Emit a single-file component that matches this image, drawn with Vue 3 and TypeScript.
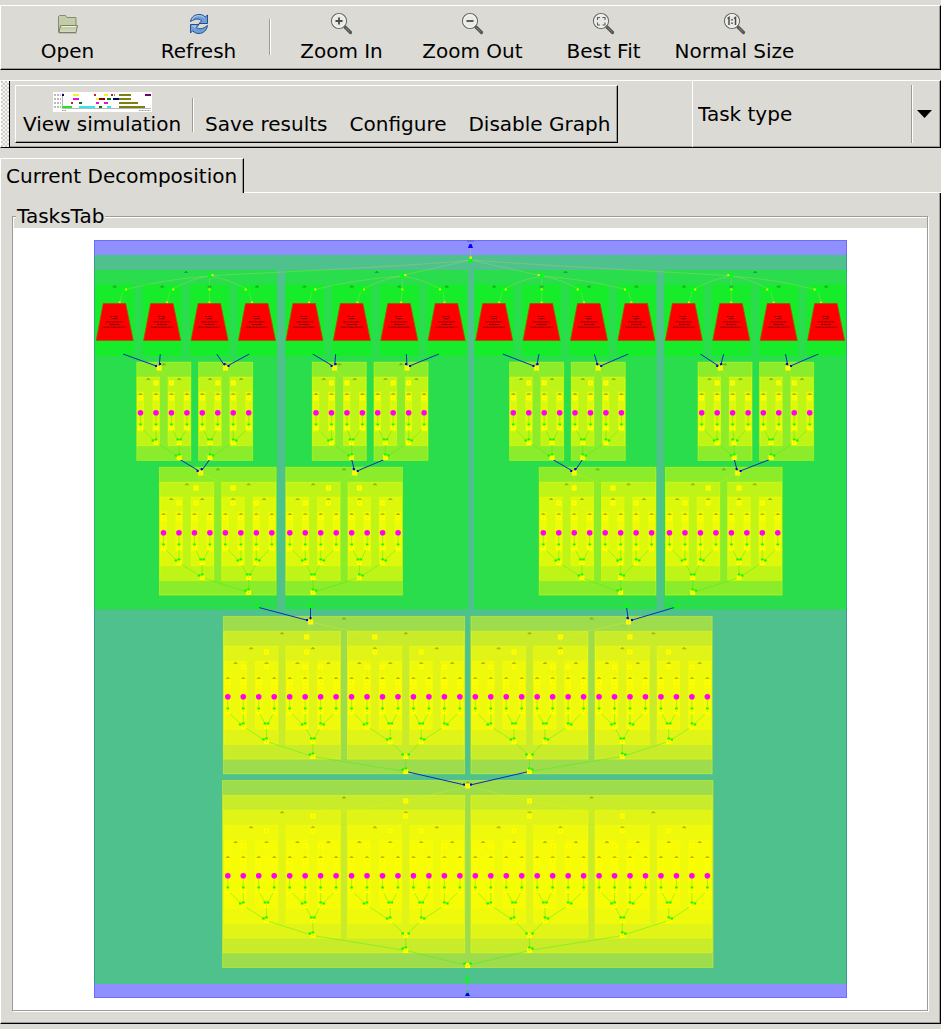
<script setup lang="ts">
import { ref } from 'vue'

interface Box { x: number; y: number; w: number; h: number }
interface Point { x: number; y: number }
interface Line { x1: number; y1: number; x2: number; y2: number }
interface Tree { x: number; y: number; depth: number; bottom: number[][]; top: number[][] }

const taskType = ref('Task type')
const pitch = 15.47

const trees: Tree[] = [
  { x: 140.5, y: 412.5, depth: 2, bottom: [[1, 2.5], [2.5]], top: [[1, 2], [1.2]] },
  { x: 202.3, y: 412.5, depth: 2, bottom: [[0.5, 2], [0.5]], top: [[1, 2], [1.5]] },
  { x: 316, y: 412.5, depth: 2, bottom: [[1, 2.3], [2.3]], top: [[1, 2], [1.2]] },
  { x: 377.7, y: 412.5, depth: 2, bottom: [[0.5, 2], [0.5]], top: [[1, 2], [1.9]] },
  { x: 513.3, y: 412.5, depth: 2, bottom: [[1, 2.5], [2.5]], top: [[1, 2], [1.5]] },
  { x: 575, y: 412.5, depth: 2, bottom: [[0.5, 2], [0.5]], top: [[1, 2], [1.5]] },
  { x: 701.7, y: 412.5, depth: 2, bottom: [[1, 2.1], [2.1]], top: [[1, 2], [1.2]] },
  { x: 763.3, y: 412.5, depth: 2, bottom: [[0.5, 2], [0.5]], top: [[1, 2], [1.6]] },
  { x: 163.5, y: 532.5, depth: 3, bottom: [[1, 2.5, 5, 6], [2.5, 5.5], [5.5]], top: [[1, 2.1, 4.5, 6], [2.1, 4.5], [2.4]] },
  { x: 289.8, y: 532.5, depth: 3, bottom: [[1, 2, 4.5, 6], [1.5, 4.5], [1.5]], top: [[1, 2.5, 4.5, 6], [2.5, 4.5], [4.2]] },
  { x: 543.3, y: 532.5, depth: 3, bottom: [[1, 2.5, 5, 6], [2.5, 5], [5]], top: [[1, 2, 4.5, 6], [2, 4.5], [2]] },
  { x: 669.5, y: 532.5, depth: 3, bottom: [[1, 2, 4.5, 6], [1.5, 4.5], [1.5]], top: [[1, 2.5, 4.5, 6], [2.5, 4.5], [4.4]] },
  {
    x: 227.8, y: 696.5, depth: 4,
    bottom: [[1, 2.5, 5, 6, 9, 10.5, 12.5, 14], [2.5, 5.5, 10.5, 12.5], [5.5, 11.5], [11.5]],
    top: [[1, 2.5, 5, 6, 9, 10, 12.5, 14], [2.5, 5.1, 9.5, 12.5], [5.1, 9.5], [5.35]],
  },
  {
    x: 475.3, y: 696.5, depth: 4,
    bottom: [[1, 2.5, 4.5, 6, 9, 10, 12.5, 14], [2.5, 4.5, 9.5, 12.5], [3.5, 9.5], [3.5]],
    top: [[1, 2.5, 5, 6, 9, 10, 12.5, 14], [2.5, 5.5, 10, 12.5], [5.5, 10], [9.9]],
  },
  {
    x: 227.8, y: 875.5, depth: 5,
    bottom: [
      [1, 2.5, 5, 6, 9, 10.5, 12.5, 14, 17, 18.5, 20.5, 22, 25, 26, 28.5, 30],
      [2.5, 5.5, 10.5, 12.5, 18.5, 20.5, 25.5, 28.5],
      [5.5, 11.5, 19.5, 25.5], [11.5, 19.5], [15.5],
    ],
    top: [
      [1, 2.5, 5, 6, 9, 10.5, 12.5, 14, 17, 18.5, 21, 22, 25, 26, 28.5, 30],
      [2.5, 5.5, 10.5, 12.5, 18.5, 21.5, 25.5, 28.5],
      [5.5, 11.5, 19.5, 25.5], [11.5, 19.5], [15.5],
    ],
  },
]

const range = (n: number): number[] => Array.from({ length: n }, (_, i) => i)

const boxes: Box[] = []
const dots: Point[] = []
const nodes: Point[] = []
const flow: Line[] = []
const fan: Line[] = []
const heads: Point[] = []
const marks: Point[] = []

for (const t of trees) {
  const at = (i: number): number => t.x + i * pitch
  for (let k = t.depth; k >= 0; k--) {
    const span = 2 ** k
    for (const g of range(2 ** (t.depth - k))) {
      const left = at(g * span) - 3 - 0.35 * k
      const right = at(g * span + span - 1) + 3 + 0.45 * k
      const top = t.y - 20.5 - 14.9 * k
      boxes.push({ x: left, y: top, w: right - left, h: 39 + 29.6 * k })
      marks.push({ x: (left + right) / 2, y: top + 2 })
      const b: Point = { x: k ? at(t.bottom[k - 1][g]) : at(g), y: t.y + 15 * (k + 1) }
      const a: Point = { x: k ? at(t.top[k - 1][g]) : at(g), y: t.y - 15 * (k + 1) + 0.5 }
      nodes.push(a, b)
      if (k === 0) {
        dots.push({ x: at(g), y: t.y + 0.3 })
        flow.push({ x1: b.x, y1: t.y, x2: b.x, y2: b.y })
        heads.push({ x: b.x, y: t.y + 12 })
      } else {
        for (const c of [2 * g, 2 * g + 1]) {
          const bx = k > 1 ? at(t.bottom[k - 2][c]) : at(c)
          const ax = k > 1 ? at(t.top[k - 2][c]) : at(c)
          flow.push({ x1: bx, y1: b.y - 15, x2: b.x, y2: b.y })
          fan.push({ x1: a.x, y1: a.y, x2: ax, y2: a.y + 15 })
          const dx = bx - b.x
          const far = Math.abs(dx) > 12
          heads.push({ x: b.x + Math.sign(dx) * (far ? 3 : Math.abs(dx) > 1 ? 1.5 : 0), y: b.y - (far ? 2 : 3) })
        }
      }
    }
  }
}

const groupX = [94.5, 285.3, 474, 663.7]
const groupHub = [209.5, 402.3, 541.7, 731.3]
const groups: Box[] = groupX.map((x) => ({ x, y: 270, w: 182.7, h: 339.5 }))
const hubNodes = [
  [123, 170.3, 209.5, 248.7],
  [312.3, 361, 402.3, 443],
  [502.7, 541.7, 580.7, 628],
  [692.3, 731.3, 770.3, 817.7],
]
const exits = [
  [123, 160.3, 216.7, 249.3],
  [312.7, 335.7, 406.3, 439],
  [502.7, 539, 594.3, 628.3],
  [700.3, 723.7, 785.5, 818.5],
]
const leaves = groupX.flatMap((_, g) => range(4).map((i) => {
  const c = 114.7 + (g * 4 + i) * 47.43
  const node = hubNodes[g][i]
  const side = Math.sign(groupHub[g] - node)
  return { c, node, side, port: c + (node - c) * 0.6, hub: groupHub[g], exit: exits[g][i] }
}))

const links: Line[] = [
  ...exits.flatMap((row, g) => row.map((x, i) => {
    const t = trees[g * 2 + (i > 1 ? 1 : 0)]
    return { x1: x, y1: 354, x2: t.x + t.top[1][0] * pitch, y2: 367 }
  })),
  ...trees.slice(0, 8).map((t, i) => {
    const d = trees[8 + Math.floor(i / 2)]
    return { x1: t.x + t.bottom[1][0] * pitch, y1: 459, x2: d.x + d.top[2][0] * pitch, y2: 472 }
  }),
  { x1: 257, y1: 607, x2: 310, y2: 621 },
  { x1: 310.5, y1: 607, x2: 310.5, y2: 621 },
  { x1: 626.5, y1: 607, x2: 628.5, y2: 621 },
  { x1: 676, y1: 607, x2: 629, y2: 621 },
  { x1: 406, y1: 771.5, x2: 467, y2: 785.5 },
  { x1: 529, y1: 771.5, x2: 468, y2: 785.5 },
]
const linkHeads: Point[] = links.map((l) => {
  const dx = l.x1 - l.x2
  return { x: l.x2 + Math.sign(dx) * (Math.abs(dx) > 12 ? 3 : 1), y: l.y2 - (Math.abs(dx) > 12 ? 1 : 3) }
})
const exitsLow: Line[] = [
  { x1: 248.5, y1: 592, x2: 257, y2: 607 },
  { x1: 313, y1: 592, x2: 310.5, y2: 607 },
  { x1: 621, y1: 592, x2: 626.5, y2: 607 },
  { x1: 692.5, y1: 592, x2: 676, y2: 607 },
]

const bars: [number, number, number, string][] = [
  [9, 2, 2, '#000080'], [20, 2, 6, '#f2f224'], [41, 2, 2, '#c02020'], [51, 2, 4, '#f2f224'], [58, 2, 2, '#c02020'], [61, 2, 1, '#888'], [66, 2, 12, '#808010'], [92, 2, 6, '#700070'],
  [20, 6, 6, '#e010e0'], [43, 6, 3, '#f2f224'], [46, 6, 6, '#900000'], [54, 6, 4, '#107010'], [60, 6, 6, '#000070'], [66, 6, 12, '#808010'],
  [18, 10, 2, '#c02020'], [26, 10, 3, '#107010'], [43, 10, 3, '#e010e0'], [51, 10, 4, '#e010e0'], [66, 10, 19, '#808010'],
  [9, 14, 10, '#20e820'], [26, 14, 16, '#30eaea'], [46, 14, 3, '#107010'], [54, 14, 4, '#30eaea'], [66, 14, 26, '#808010'],
]
const textRows: [number, number, string][] = [
  [316.5, 9, '2 .4 1.5 .3 3'], [318.7, 6, '1 .5 3 .4'], [321.9, 17, '3 .4 2 .5 4 .3'], [324.5, 10, '2 .3 3 .5'], [327.2, 22, '2 .4 3 .3 1 .4'],
]
</script>

<template>
  <main class="app">
    <nav class="bar main-bar" aria-label="Main toolbar">
      <button type="button" class="tool">
        <svg class="icon" viewBox="0 0 24 24" aria-hidden="true">
          <defs>
            <linearGradient id="folder" x2="0" y2="1"><stop stop-color="#b9c49a" /><stop offset="1" stop-color="#d5dcc0" /></linearGradient>
          </defs>
          <path d="M2.500 20.500V4.500l1-1h6l1.500 2h9v9" fill="#c3cba8" stroke="#858a70" />
          <path d="M4.500 13.500h17l-1.500 7h-17z" fill="url(#folder)" stroke="#7b8068" />
          <path d="M5.300 14.500h15" stroke="#eef2df" />
          <path d="M3 21.500h18" stroke="#aaa99f" opacity=".6" />
        </svg>
        <span>Open</span>
      </button>
      <button type="button" class="tool">
        <svg class="icon" viewBox="0 0 24 24" aria-hidden="true">
          <path d="M3.500 9.500C4.500 4.500 8 2.500 12 2.500c3 0 4.700 1 6.200 2.500L20.500 3v8.500h-8.500l2.700-2.800C11.500 6.300 8.500 6.500 3.500 9.500z" fill="#6f9fd8" stroke="#234f91" stroke-linejoin="round" />
          <path d="M5 8C6 4.800 9 3.700 12 3.700c2.500 0 4.300 1 5.600 2.300" fill="none" stroke="#b8d2f0" />
          <path d="M20.500 13.500c-.7 5-4.500 8-8.500 8-2.800 0-4.700-1-6.300-2.700L3.500 21v-8.500H12l-2.700 3c3.200 2.300 6.500 1.500 11.200-2z" fill="#6f9fd8" stroke="#234f91" stroke-linejoin="round" />
          <path d="M5 14h4l-2 2.200" fill="none" stroke="#b8d2f0" />
        </svg>
        <span>Refresh</span>
      </button>
      <i class="rule"></i>
      <button v-for="kind in ['Zoom In', 'Zoom Out', 'Best Fit', 'Normal Size']" :key="kind" type="button" class="tool">
        <svg class="icon" viewBox="0 0 24 24" aria-hidden="true">
          <path d="M15 15l5.500 5.500" stroke="#555753" stroke-width="3.200" stroke-linecap="round" />
          <path d="M15.500 15.500l4 4" stroke="#8a8c88" stroke-width=".8" />
          <circle cx="9" cy="9" r="7.500" fill="#eeeeec" fill-opacity=".75" stroke="#666864" stroke-width="1.200" />
          <circle cx="9" cy="9" r="6.400" fill="none" stroke="#fff" stroke-opacity=".7" />
          <path v-if="kind === 'Zoom In'" d="M5.500 9h7M9 5.500v7" stroke="#4b4d49" stroke-width="1.800" />
          <path v-else-if="kind === 'Zoom Out'" d="M5.500 9h7" stroke="#4b4d49" stroke-width="1.800" />
          <path v-else-if="kind === 'Best Fit'" d="M5.500 8V5.500H8M10.500 5.500H13V8M13 10.500V13h-2.500M8 13H5.500v-2.500" fill="none" stroke="#5d5f5b" stroke-width="1.100" />
          <path v-else d="M4.500 6.500l1.500-1V13M11 6.500l1.500-1V13M9 7v1.500M9 10.500V12" fill="none" stroke="#4b4d49" stroke-width="1.500" />
        </svg>
        <span>{{ kind }}</span>
      </button>
    </nav>

    <section class="bar task-bar">
      <div class="grip"></div>
      <div class="actions">
        <button type="button" class="action">
          <svg class="thumb" viewBox="0 0 99 20" aria-hidden="true">
            <rect width="99" height="20" fill="#fff" />
            <path d="M1 3h7M1 7h7M1 11h7M1 15h7" stroke="#777" stroke-width="1" stroke-dasharray="2 1" />
            <path d="M9.500 1v15.500H98" stroke="#888" fill="none" stroke-width=".6" />
            <path d="M9 18.500h4M86 18.500h12" stroke="#999" stroke-dasharray="1 .5" />
            <rect v-for="(b, i) in bars" :key="i" :x="b[0]" :y="b[1]" :width="b[2]" height="2" :fill="b[3]" />
          </svg>
          <span>View simulation</span>
        </button>
        <i class="rule short"></i>
        <button type="button" class="action">Save results</button>
        <button type="button" class="action">Configure</button>
        <button type="button" class="action">Disable Graph</button>
      </div>
      <div class="combo">
        <select v-model="taskType" aria-label="Task type">
          <option>Task type</option>
        </select>
        <i class="rule tall"></i>
        <svg class="arrow" viewBox="0 0 15 8" aria-hidden="true"><path d="M0 0h15L7.500 8z" /></svg>
      </div>
    </section>

    <section class="notebook">
      <div class="tabs" role="tablist">
        <button type="button" class="tab" role="tab" aria-selected="true">Current Decomposition</button>
        <div class="tabs-rest"></div>
      </div>
      <div class="page" role="tabpanel">
        <fieldset class="frame">
          <legend>TasksTab</legend>
          <svg class="graph" viewBox="13 228 914 782" role="img" aria-label="Task decomposition graph">
            <rect x="94.500" y="240.500" width="752" height="757" fill="#8f8fff" stroke="#6c6cff" />
            <rect x="94" y="255" width="753" height="729" class="green" />
            <path d="M94.500 255v729M846.500 255v729" stroke="#358f90" opacity=".5" />
            <rect v-for="(g, i) in groups" :key="i" :x="g.x" :y="g.y" :width="g.w" :height="g.h" class="green" />

            <path d="M470.500 257v-10" stroke="#a0a8c0" />
            <path d="M470.500 260Q430 265 213 275.500M470.500 260L404 275M470.500 260L540 275.500M470.500 260Q520 264 728 275.500" class="branch" />
            <g v-for="(l, i) in leaves" :key="'l' + i">
              <rect :x="l.c - 19.500" y="284.500" width="39" height="71.500" class="green" />
              <path :d="`M${l.hub} 276Q${(l.hub + l.node) / 2} 279 ${l.node} 290L${l.port} 303`" class="branch" />
              <path :d="`M${l.c - 1} 285.500h2v1h1v1h-4v-1h1z`" fill="#07701d" opacity=".5" />
              <rect :x="l.node - 2" y="288" width="4" height="4" fill="#00ff18" />
              <rect :x="l.node - 1 + l.side * 3" y="288.500" width="2" height="2" fill="#e8f200" />
              <rect :x="l.port - 1" y="301.500" width="2" height="2" fill="#f2e800" />
              <polygon :points="`${l.c - 11.500},303.500 ${l.c + 11},303.500 ${l.c + 18.500},340.500 ${l.c - 18.500},340.500`" fill="#f00" stroke="#b05000" stroke-width=".8" />
              <path v-for="r in textRows" :key="r[0]" :d="`M${l.c - r[1] / 2} ${r[0]}h${r[1]}`" :stroke-dasharray="r[2]" class="tiny" />
              <circle :cx="l.exit" cy="353" r="2" fill="#00ff18" />
            </g>
            <g v-for="(x, i) in groupHub" :key="'h' + i">
              <rect :x="x - 2" y="274" width="4" height="4" fill="#00ff18" />
              <rect :x="x + (i < 2 ? 2 : -4)" y="274" width="2" height="2" fill="#e8f000" />
              <path :d="`M${groupX[i] + 90.500} 271h2v1h1v1h-4v-1h1z`" fill="#108040" opacity=".6" />
            </g>
            <rect x="468.500" y="258.500" width="4" height="4" fill="#00ff18" />
            <rect x="469.500" y="256.500" width="2.500" height="2.500" fill="#e8f000" />
            <path d="M468 248l1.500-4h2l1.500 4z" fill="#00f" />
            <path d="M467 241h7" stroke="#5a5ab8" />

            <rect x="222.500" y="780.500" width="490.500" height="187" class="yellow" />
            <rect v-for="(b, i) in boxes.filter((v) => v.w < 480)" :key="'b' + i" :x="b.x" :y="b.y" :width="b.w" :height="b.h" class="yellow" />
            <path v-for="(m, i) in marks" :key="'m' + i" :d="`M${m.x - 1} ${m.y - 1}h2v1h1v1h-4v-1h1z`" class="mark" />
            <line v-for="(l, i) in fan" :key="'f' + i" v-bind="l" class="fan" />
            <line v-for="(l, i) in flow" :key="'w' + i" v-bind="l" class="flow" />
            <line v-for="(l, i) in exitsLow" :key="'x' + i" v-bind="l" class="flow" />
            <line v-for="(l, i) in links" :key="'k' + i" v-bind="l" class="link" />
            <rect v-for="(n, i) in nodes" :key="'n' + i" :x="n.x - 2.500" :y="n.y - 2.500" width="5" height="5" fill="#ff0" />
            <rect v-for="(n, i) in nodes" :key="'c' + i" :x="n.x - 0.500" :y="n.y - 0.500" width="1" height="1" fill="#e0dc00" />
            <rect v-for="(n, i) in heads" :key="'g' + i" :x="n.x - 1.300" :y="n.y - 1" width="2.600" height="2" fill="#10f800" />
            <rect v-for="(n, i) in linkHeads" :key="'q' + i" :x="n.x - 1" :y="n.y - 1" width="2" height="2" fill="#0000e0" />
            <circle v-for="(d, i) in dots" :key="'d' + i" :cx="d.x" :cy="d.y" r="2.800" class="dot" />
            <path v-for="(l, i) in exitsLow" :key="'t' + i" :d="`M${l.x2} 604l2.500 4h-5z`" fill="#00ff10" />

            <path d="M467.500 968v24" class="flow" />
            <path d="M467.500 976l2.500 3.500-2.500 3-2.500-3z" fill="#00ff10" />
            <rect x="466.500" y="991" width="2" height="2" fill="#00e830" />
            <path d="M465 996l1.500-3h2l1.500 3z" fill="#0000d8" />
          </svg>
        </fieldset>
      </div>
    </section>
  </main>
</template>

<style>
body { margin: 0; background: #dcdad5; }
</style>

<style scoped>
.app {
  padding: 5px 0;
  background: #dcdad5;
  color: #000;
  font: 20px/24px "DejaVu Sans", sans-serif;
}
button, select {
  margin: 0;
  padding: 0;
  border: 0;
  background: none;
  color: inherit;
  font: inherit;
}
.bar {
  display: flex;
  box-sizing: border-box;
  border: 1px solid #fff;
  border-right-color: #000;
  border-bottom-color: #000;
  box-shadow: inset -1px -1px #9d9b95;
}
.main-bar { height: 65px; padding-left: 1px; }
.tool {
  width: 131px;
  padding-top: 6px;
  display: flex;
  flex-direction: column;
  align-items: center;
  gap: 3px;
  white-space: nowrap;
}
.icon { width: 24px; height: 24px; fill: none; }
.rule {
  width: 0;
  height: 36px;
  margin: 13px 5px 0;
  border-left: 1px solid #9d9b95;
  border-right: 1px solid #fff;
}
.task-bar { height: 68px; margin-top: 10px; }
.grip {
  width: 8px;
  border-right: 1px solid #000;
  background: repeating-conic-gradient(#f6f5f2 0 25%, #d0cec9 0 50%) 0 0 / 4px 4px;
}
.actions {
  display: flex;
  align-items: flex-end;
  box-sizing: border-box;
  height: 58px;
  margin: 4px 0 0 5px;
  padding: 0 7px 6px;
  border: 1px solid #fff;
  border-right-color: #000;
  border-bottom-color: #000;
  box-shadow: inset -1px -1px #9d9b95;
}
.action {
  display: flex;
  flex-direction: column;
  align-items: center;
  white-space: nowrap;
}
.action + .action { margin-left: 22px; }
.thumb { width: 99px; height: 20px; }
.short { height: 34px; margin: 0 11px 4px; }
.combo {
  display: flex;
  align-items: center;
  width: 239px;
  margin-left: auto;
  padding-right: 8px;
  border-left: 1px solid #fff;
}
.combo select { flex: 1; height: 100%; padding-left: 5px; appearance: none; min-width: 0; }
.tall { height: 58px; margin: 0 4px 0 0; }
.arrow { width: 15px; height: 8px; }
.notebook { margin-top: 10px; }
.tabs { display: flex; align-items: stretch; height: 35px; }
.tab {
  padding: 0 6px 0 5px;
  border-left: 1px solid #fff;
  border-top: 1px solid #fff;
  border-right: 1px solid #000;
  box-shadow: inset -1px 0 #9d9b95;
  white-space: nowrap;
}
.tabs-rest { flex: 1; border-bottom: 1px solid #fff; }
.page {
  padding: 11px 12px 12px 11px;
  border-left: 1px solid #fff;
  border-right: 1px solid #000;
  border-bottom: 1px solid #000;
  box-shadow: inset -1px -1px #9d9b95;
}
.frame {
  min-width: 0;
  margin: 0;
  padding: 0;
  border: 1px solid #9d9b95;
  box-shadow: 1px 1px #fff, inset 1px 1px #fff;
}
.frame legend { margin-left: 3px; padding: 0 1px; background: #dcdad5; }
.graph { display: block; width: 100%; height: auto; background: #fff; }
.green { fill: #0f0; fill-opacity: .45; }
.yellow { fill: #ff0; fill-opacity: .45; stroke: #ff0; stroke-opacity: .4; stroke-width: 1; }
.branch { fill: none; stroke: #b8d860; stroke-opacity: .5; stroke-width: .7; }
.tiny { stroke: #700; stroke-width: 1; fill: none; }
.mark { fill: #605f00; opacity: .4; }
.fan { stroke: #e8f000; stroke-opacity: .35; stroke-width: .8; }
.flow { stroke: #30f010; stroke-opacity: .5; stroke-width: .8; }
.link { stroke: #1028c0; stroke-width: 1; }
.dot { fill: #ff00f0; }
</style>
